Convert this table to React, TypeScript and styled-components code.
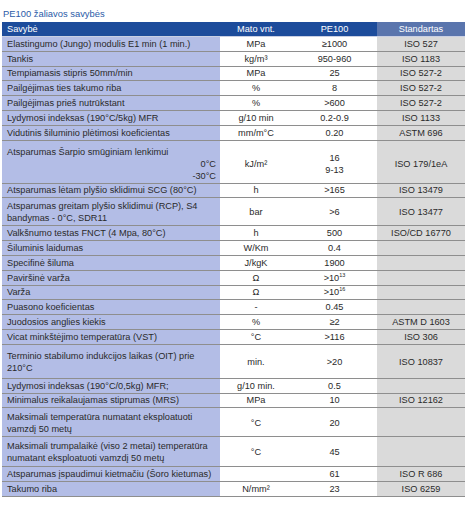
import React from "react";
import styled, { createGlobalStyle } from "styled-components";

const GlobalStyle = createGlobalStyle`
  html, body {
    margin: 0;
    padding: 0;
    background: #ffffff;
  }
  body {
    font-family: "Liberation Sans", Arial, sans-serif;
  }
`;

interface PropertyRow {
  name: React.ReactNode;
  unit?: React.ReactNode;
  value: React.ReactNode;
  std?: string;
  h?: number;
  shift?: number;
}

// single-line row height (without the 1px bottom rule)
const ONE = 13.8;

const Page = styled.div`
  padding: 8px 0 0 2px;
  width: 463px;
`;

const Title = styled.div`
  color: #2b5ba8;
  font-size: 9.4px;
  line-height: 12px;
  padding-left: 1px;
  margin-bottom: 2px;
`;

const Row = styled.div<{ $h: number; $shift?: number }>`
  display: grid;
  grid-template-columns: 218px 72px 85px 88px;
  height: ${(p) => p.$h}px;
  border-bottom: 1px solid #8e8e8e;
  font-size: 9.2px;
  line-height: 12px;
  color: #2a2a2a;

  & > * {
    box-sizing: border-box;
    padding-top: ${(p) => p.$shift ?? 0}px;
  }
`;

const HeadRow = styled(Row)`
  border-bottom: 1px solid #c9cfe3;
  color: #ffffff;
`;

const Cell = styled.div<{ $bg?: string }>`
  display: flex;
  flex-direction: column;
  justify-content: center;
  align-items: center;
  text-align: center;
  background: ${(p) => p.$bg ?? "#ffffff"};
`;

const NameCell = styled(Cell)`
  align-items: stretch;
  text-align: left;
  padding-left: 5px;
  padding-right: 4px;
  background: #b3bde6;
`;

const HeadCell = styled(Cell)`
  background: #1d4c9b;
`;

const HeadName = styled(HeadCell)`
  align-items: flex-start;
  padding-left: 5px;
`;

const Temps = styled.div`
  text-align: right;
`;

const Sup = styled.sup`
  font-size: 5.5px;
  vertical-align: 4px;
  line-height: 0;
`;

const rows: PropertyRow[] = [
  { name: "Elastingumo (Jungo) modulis E1 min (1 min.)", unit: "MPa", value: "≥1000", std: "ISO 527" },
  { name: "Tankis", unit: "kg/m³", value: "950-960", std: "ISO 1183" },
  { name: "Tempiamasis stipris 50mm/min", unit: "MPa", value: "25", std: "ISO 527-2" },
  { name: "Pailgėjimas ties takumo riba", unit: "%", value: "8", std: "ISO 527-2" },
  { name: "Pailgėjimas prieš nutrūkstant", unit: "%", value: ">600", std: "ISO 527-2" },
  { name: "Lydymosi indeksas (190°C/5kg) MFR", unit: "g/10 min", value: "0.2-0.9", std: "ISO 1133" },
  { name: "Vidutinis šiluminio plėtimosi koeficientas", unit: "mm/m°C", value: "0.20", std: "ASTM 696" },
  {
    name: (
      <>
        <div>Atsparumas Šarpio smūginiam lenkimui</div>
        <Temps>
          0°C
          <br />
          -30°C
        </Temps>
      </>
    ),
    unit: "kJ/m²",
    value: (
      <>
        16
        <br />
        9-13
      </>
    ),
    std: "ISO 179/1eA",
    h: 42,
    shift: 4,
  },
  { name: "Atsparumas lėtam plyšio sklidimui SCG (80°C)", unit: "h", value: ">165", std: "ISO 13479" },
  {
    name: "Atsparumas greitam plyšio sklidimui (RCP), S4 bandymas - 0°C, SDR11",
    unit: "bar",
    value: ">6",
    std: "ISO 13477",
    h: 27,
  },
  { name: "Valkšnumo testas FNCT (4 Mpa, 80°C)", unit: "h", value: "500", std: "ISO/CD 16770" },
  { name: "Šiluminis laidumas", unit: "W/Km", value: "0.4" },
  { name: "Specifinė šiluma", unit: "J/kgK", value: "1900" },
  { name: "Paviršinė varža", unit: "Ω", value: <span>&gt;10<Sup>13</Sup></span> },
  { name: "Varža", unit: "Ω", value: <span>&gt;10<Sup>16</Sup></span> },
  { name: "Puasono koeficientas", unit: "-", value: "0.45" },
  { name: "Juodosios anglies kiekis", unit: "%", value: "≥2", std: "ASTM D 1603" },
  { name: "Vicat minkštėjimo temperatūra (VST)", unit: "°C", value: ">116", std: "ISO 306" },
  {
    name: "Terminio stabilumo indukcijos laikas (OIT) prie 210°C",
    unit: "min.",
    value: ">20",
    std: "ISO 10837",
    h: 33,
    shift: 2,
  },
  { name: "Lydymosi indeksas (190°C/0,5kg) MFR;", unit: "g/10 min.", value: "0.5" },
  { name: "Minimalus reikalaujamas stiprumas (MRS)", unit: "MPa", value: "10", std: "ISO 12162" },
  {
    name: "Maksimali temperatūra numatant eksploatuoti vamzdį 50 metų",
    unit: "°C",
    value: "20",
    h: 28,
    shift: 2,
  },
  {
    name: "Maksimali trumpalaikė (viso 2 metai) temperatūra numatant eksploatuoti vamzdį 50 metų",
    unit: "°C",
    value: "45",
    h: 29,
  },
  { name: "Atsparumas įspaudimui kietmačiu (Šoro kietumas)", value: "61", std: "ISO R 686" },
  { name: "Takumo riba", unit: "N/mm²", value: "23", std: "ISO 6259" },
];

export default function App() {
  return (
    <>
      <GlobalStyle />
      <Page>
        <Title>PE100 žaliavos savybės</Title>
        <HeadRow $h={14}>
          <HeadName>Savybė</HeadName>
          <HeadCell>Mato vnt.</HeadCell>
          <HeadCell>PE100</HeadCell>
          <Cell $bg="#5a75ad">Standartas</Cell>
        </HeadRow>
        {rows.map((r, i) => (
          <Row key={i} $h={r.h ?? ONE} $shift={r.shift}>
            <NameCell>{r.name}</NameCell>
            <Cell>{r.unit}</Cell>
            <Cell>{r.value}</Cell>
            <Cell $bg="#dadada">{r.std}</Cell>
          </Row>
        ))}
      </Page>
    </>
  );
}
